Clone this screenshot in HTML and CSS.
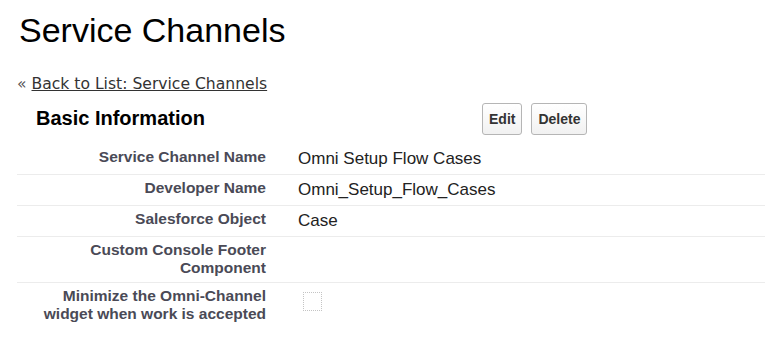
FILE: index.html
```html
<!DOCTYPE html>
<html lang="en">
<head>
  <meta charset="UTF-8">
  <title>Service Channels</title>
  <link rel="stylesheet" href="styles.css">
</head>
<body>
  <h1 class="page-title">Service Channels</h1>

  <div class="back">
    &laquo; <a href="#">Back to List: Service Channels</a>
  </div>

  <div class="block">
    <div class="block-header">
      <h2>Basic Information</h2>
      <div class="buttons">
        <button class="btn">Edit</button>
        <button class="btn">Delete</button>
      </div>
    </div>

    <table class="detail">
      <tr>
        <td class="label">Service Channel Name</td>
        <td class="value">Omni Setup Flow Cases</td>
      </tr>
      <tr>
        <td class="label">Developer Name</td>
        <td class="value">Omni_Setup_Flow_Cases</td>
      </tr>
      <tr>
        <td class="label">Salesforce Object</td>
        <td class="value">Case</td>
      </tr>
      <tr>
        <td class="label">Custom Console Footer Component</td>
        <td class="value"></td>
      </tr>
      <tr class="last">
        <td class="label">Minimize the Omni-Channel widget when work is accepted</td>
        <td class="value"><span class="checkbox"></span></td>
      </tr>
    </table>
  </div>
</body>
</html>
```

FILE: styles.css
```css
body {
  margin: 0;
  padding: 0 0 0 17px;
  font-family: "Liberation Sans", Arial, sans-serif;
  color: #000;
  background: #fff;
}

.page-title {
  margin: 11px 0 0 2px;
  font-size: 34px;
  font-weight: normal;
  line-height: 39px;
}

.back {
  margin-top: 25px;
  font-family: "DejaVu Sans", Verdana, sans-serif;
  font-size: 15.6px;
  line-height: 18px;
  color: #555;
}

.back a {
  color: #333;
}

.block-header {
  display: flex;
  align-items: center;
  height: 51px;
}

.block-header h2 {
  margin: 0 0 0 19px;
  width: 446px;
  font-size: 20px;
  font-weight: bold;
  color: #000;
}

.buttons {
  display: flex;
  gap: 9px;
}

.btn {
  height: 32px;
  padding: 0 6px;
  font-family: "Liberation Sans", Arial, sans-serif;
  font-size: 14px;
  font-weight: bold;
  color: #333;
  background: linear-gradient(#fff, #f1f1f1);
  border: 1px solid #b5b5b5;
  border-radius: 3px;
}

.detail {
  width: 100%;
  border-collapse: collapse;
}

.detail td {
  padding: 4px 0 5px;
  border-bottom: 1px solid #ececec;
  vertical-align: top;
}

.detail tr.last td {
  border-bottom: none;
}

.label {
  width: 230px;
  padding-left: 19px !important;
  padding-right: 12px !important;
  text-align: right;
  font-size: 15.5px;
  font-weight: bold;
  line-height: 18px;
  color: #4a4a56;
}

.value {
  padding-left: 20px !important;
  font-size: 17px;
  line-height: 21px;
  color: #222;
}

.checkbox {
  display: block;
  width: 17px;
  height: 17px;
  margin: 5px 0 0 5px;
  border: 1px dotted #c4c4c4;
}
```
